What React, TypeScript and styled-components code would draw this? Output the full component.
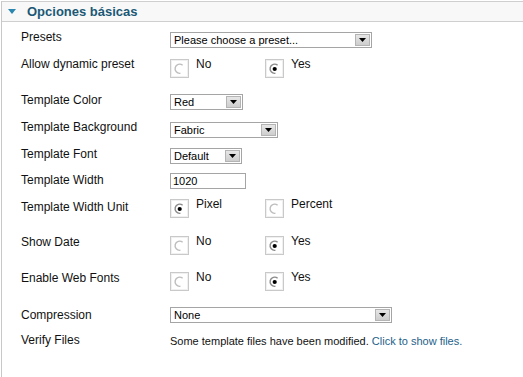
import React from "react";
import styled, { createGlobalStyle } from "styled-components";

const GlobalStyle = createGlobalStyle`
  html, body {
    margin: 0;
    padding: 0;
    background: #fff;
    font-family: "Liberation Sans", Arial, sans-serif;
  }
`;

const Page = styled.div`
  width: 523px;
  height: 377px;
  padding: 1px 0 0 1px;
  box-sizing: border-box;
  overflow: hidden;
`;

const Panel = styled.div`
  border-left: 1px solid #c8c8c8;
  height: 100%;
`;

const Header = styled.div`
  display: flex;
  align-items: center;
  gap: 11px;
  height: 19px;
  padding-left: 6px;
  background: #f8f8f8;
  border-top: 1px solid #cfcfcf;
  border-bottom: 1px solid #cfcfcf;
  color: #1b5876;
  font-size: 13px;
  font-weight: bold;
`;

const Body = styled.div`
  padding: 8px 0 0 19px;
`;

const Row = styled.div<{ $h: number }>`
  display: grid;
  grid-template-columns: 149px 1fr;
  align-items: start;
  height: ${(p) => p.$h}px;
  font-size: 12px;
  line-height: 14px;
  color: #111;
`;

const Label = styled.div`
  white-space: nowrap;
`;

const Field = styled.div<{ $dy?: number }>`
  display: flex;
  margin-top: ${(p) => p.$dy ?? 0}px;
`;

const SelectBox = styled.div<{ $w: number }>`
  display: flex;
  align-items: center;
  justify-content: space-between;
  box-sizing: border-box;
  width: ${(p) => p.$w}px;
  height: 16px;
  padding: 0 1px 0 3px;
  border: 1px solid #a5a5a5;
  background: #fff;
  font-size: 11px;
  color: #000;
`;

const ArrowButton = styled.div`
  display: flex;
  align-items: center;
  justify-content: center;
  width: 15px;
  height: 12px;
  border: 1px solid #b4b4b4;
  background: linear-gradient(#e6e6e6, #cdcdcd);
  box-sizing: border-box;
`;

const TextInput = styled.div`
  box-sizing: border-box;
  width: 76px;
  height: 16px;
  padding-left: 2px;
  border: 1px solid #a5a5a5;
  font-size: 11px;
  line-height: 14px;
  color: #000;
`;

const RadioGroup = styled.div`
  display: flex;
`;

const RadioOption = styled.div`
  display: flex;
  align-items: flex-start;
  gap: 7px;
  width: 95px;
`;

const RadioText = styled.span`
  padding-top: 0;
`;

const Note = styled.span`
  font-size: 11px;
  color: #111;
`;

const Link = styled.a`
  color: #1d6189;
  text-decoration: none;
`;

const Select = ({ value, width }: { value: string; width: number }) => (
  <SelectBox $w={width}>
    <span>{value}</span>
    <ArrowButton>
      <svg width="7" height="4" viewBox="0 0 7 4">
        <path d="M0 0h7L3.5 4z" fill="#000" />
      </svg>
    </ArrowButton>
  </SelectBox>
);

const RadioMark = ({ checked }: { checked?: boolean }) => (
  <svg width="19" height="19" viewBox="0 0 19 19" style={{ flexShrink: 0, marginTop: 2 }}>
    <rect x="0.5" y="0.5" width="18" height="18" fill="#fff" stroke="#c9c9c9" />
    <rect x="1.5" y="1.5" width="16" height="16" fill="none" stroke="#f0f0f0" />
    <path
      d="M12.6 6.2 A4.6 4.6 0 1 0 10.4 14.3"
      fill="none"
      stroke={checked ? "#8a8a8a" : "#bdbdbd"}
      strokeWidth="1.4"
    />
    {checked && <circle cx="9.7" cy="10" r="2.1" fill="#000" />}
  </svg>
);

const Radios = ({ options, selected }: { options: string[]; selected: number }) => (
  <RadioGroup>
    {options.map((o, i) => (
      <RadioOption key={o}>
        <RadioMark checked={i === selected} />
        <RadioText>{o}</RadioText>
      </RadioOption>
    ))}
  </RadioGroup>
);

export default function App() {
  return (
    <Page>
      <GlobalStyle />
      <Panel>
        <Header>
          <svg width="8" height="5" viewBox="0 0 8 5">
            <path d="M0 0h8L4 5z" fill="#2b86b0" />
          </svg>
          Opciones básicas
        </Header>
        <Body>
          <Row $h={27}>
            <Label>Presets</Label>
            <Field $dy={2}>
              <Select value="Please choose a preset..." width={202} />
            </Field>
          </Row>
          <Row $h={36}>
            <Label>Allow dynamic preset</Label>
            <Field $dy={0}>
              <Radios options={["No", "Yes"]} selected={1} />
            </Field>
          </Row>
          <Row $h={27}>
            <Label>Template Color</Label>
            <Field $dy={1}>
              <Select value="Red" width={73} />
            </Field>
          </Row>
          <Row $h={27}>
            <Label>Template Background</Label>
            <Field $dy={2}>
              <Select value="Fabric" width={108} />
            </Field>
          </Row>
          <Row $h={26}>
            <Label>Template Font</Label>
            <Field $dy={1}>
              <Select value="Default" width={72} />
            </Field>
          </Row>
          <Row $h={27}>
            <Label>Template Width</Label>
            <Field $dy={0}>
              <TextInput>1020</TextInput>
            </Field>
          </Row>
          <Row $h={35}>
            <Label>Template Width Unit</Label>
            <Field $dy={-3}>
              <Radios options={["Pixel", "Percent"]} selected={0} />
            </Field>
          </Row>
          <Row $h={36}>
            <Label>Show Date</Label>
            <Field $dy={-1}>
              <Radios options={["No", "Yes"]} selected={1} />
            </Field>
          </Row>
          <Row $h={37}>
            <Label>Enable Web Fonts</Label>
            <Field $dy={-1}>
              <Radios options={["No", "Yes"]} selected={1} />
            </Field>
          </Row>
          <Row $h={25}>
            <Label>Compression</Label>
            <Field $dy={-1}>
              <Select value="None" width={222} />
            </Field>
          </Row>
          <Row $h={25}>
            <Label>Verify Files</Label>
            <Field $dy={1}>
              <Note>
                Some template files have been modified.{" "}
                <Link href="#">Click to show files.</Link>
              </Note>
            </Field>
          </Row>
        </Body>
      </Panel>
    </Page>
  );
}
